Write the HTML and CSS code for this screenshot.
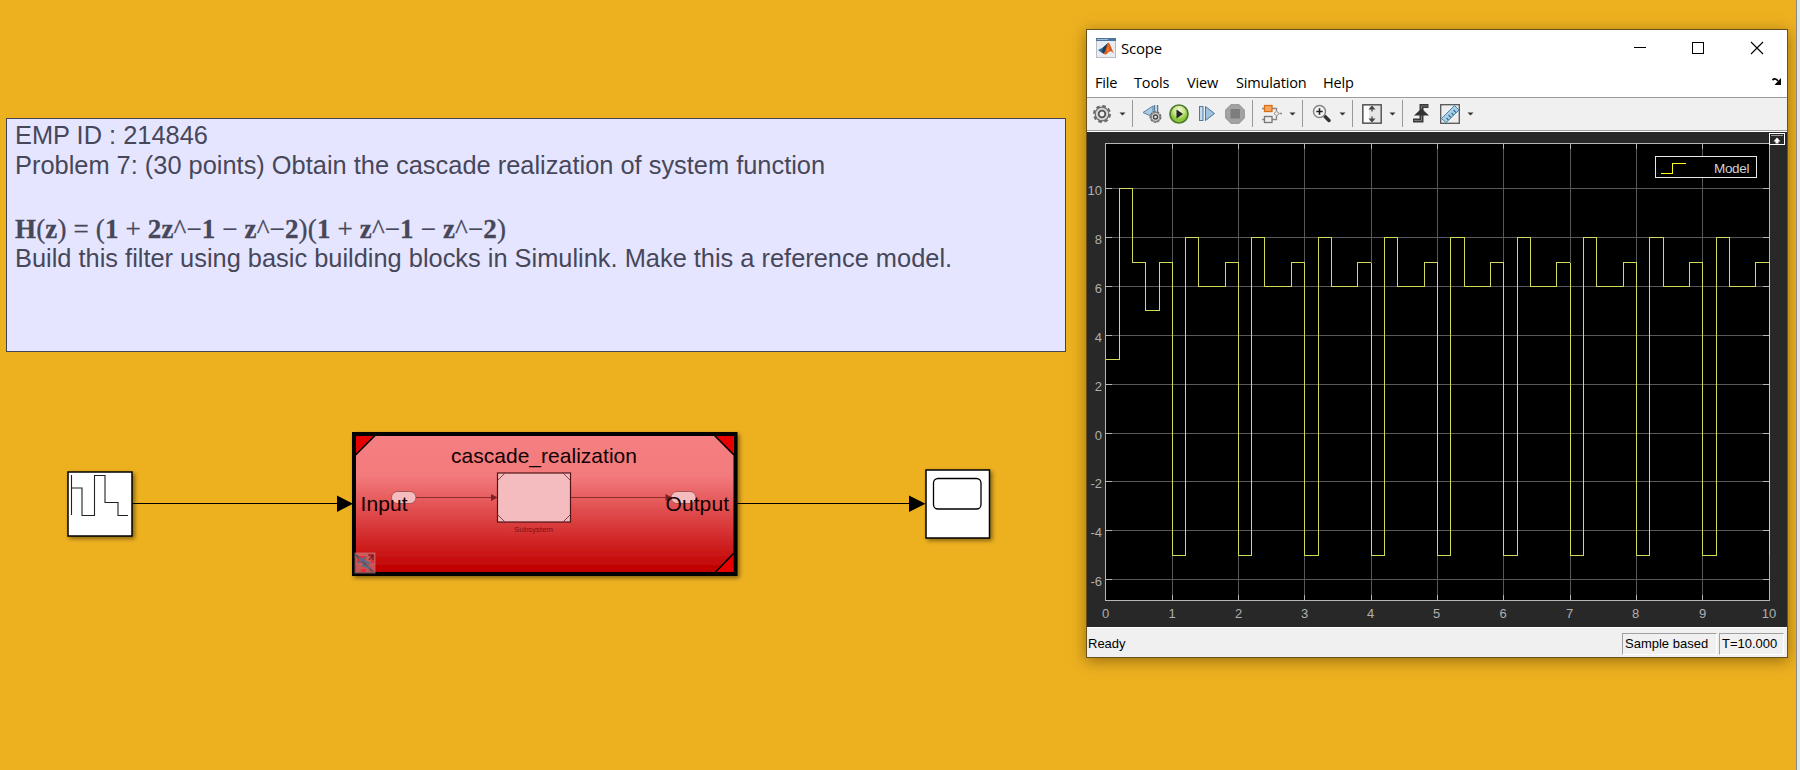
FILE: index.html
```html
<!DOCTYPE html>
<html lang="en">
<head>
<meta charset="utf-8">
<title>Cascade realization</title>
<link rel="stylesheet" href="styles.css">
</head>
<body>
<main class="desktop">
  <section class="model">
    <div class="note">
      <p class="line">EMP ID : 214846</p>
      <p class="line">Problem 7: (30 points) Obtain the cascade realization of system function</p>
      <p class="formula"><span class="n">H</span>(<span class="n">z</span>) = (<span class="n">1</span> + <span class="n">2z</span><i>^−</i><span class="n">1</span> − <span class="n">z</span><i>^−</i><span class="n">2</span>)(<span class="n">1</span> + <span class="n">z</span><i>^−</i><span class="n">1</span> − <span class="n">z</span><i>^−</i><span class="n">2</span>)</p>
      <p class="line">Build this filter using basic building blocks in Simulink. Make this a reference model.</p>
    </div>
    <svg class="diagram" width="1080" height="180" viewBox="0 420 1080 180">
      <defs>
        <linearGradient id="red" x1="0" y1="0" x2="0" y2="1">
          <stop offset="0" stop-color="#f57f81"/><stop offset=".3" stop-color="#f37a7c"/><stop offset=".96" stop-color="#c20202"/><stop offset="1" stop-color="#bd0000"/>
        </linearGradient>
        <filter id="sh" x="-20%" y="-20%" width="150%" height="150%"><feDropShadow dx="2" dy="2" stdDeviation="2" flood-color="#000" flood-opacity=".45"/></filter>
      </defs>
      <path d="M132 503.5H340M737 503.5H912" stroke="#000" stroke-width="1.2"/>
      <path d="M337 495.5L353 503.7L337 512zM909 495.5L925.500 503.700L909 512z"/>
      <g fill="#fff" stroke="#000" stroke-width="1.5">
        <rect x="68" y="472" width="64" height="64" filter="url(#sh)"/>
        <path d="M71.500 475V515M71.500 488H82V515.500H94.500V475.500H105V502.500H118V515.500H128" fill="none" stroke="#222" stroke-width="1.1"/>
        <rect x="926" y="470" width="63.500" height="68" filter="url(#sh)"/>
        <rect x="933.500" y="478.500" width="47.500" height="30.500" rx="4.500" stroke-width="1.3"/>
      </g>
      <rect x="354" y="434" width="381.500" height="140" fill="url(#red)" stroke="#000" stroke-width="4" filter="url(#sh)"/>
      <path d="M356 436h18l-18 18zM733.500 436h-18l18 18zM733.500 572v-18l-18 18z" fill="#e60000"/>
      <path d="M375 435.500L355.500 455M714.500 435.500L734 455M734 553L715 572.500" stroke="#000" stroke-width="1.7"/>
      <g fill="#f4bcbe" stroke="#6a2023" stroke-width="1">
        <rect x="391.500" y="491.500" width="24.500" height="12" rx="6" stroke="#a55"/>
        <rect x="671" y="491.500" width="25" height="12" rx="6" stroke="#a55"/>
        <path d="M416 497.500H494M571 497.500H668" fill="none" stroke="#8b2b2e"/>
        <path d="M491 494l6.500 3.500l-6.500 3.500zM665.500 494l6.500 3.500l-6.500 3.500z" fill="#7a2226" stroke="none"/>
        <rect x="497.500" y="473" width="73" height="49" stroke="#501518" stroke-width="1.2"/>
        <path d="M505 473L497.500 480.500M563 473L570.500 480.500M505 522L497.500 514.500M563 522L570.500 514.500" stroke="#7a3236" stroke-width=".9"/>
      </g>
      <text x="514" y="531.800" font-size="8" textLength="39" fill="#7d1216">Subsystem</text>
      <g font-size="21" fill="#100">
        <text x="451" y="462.700" textLength="186">cascade_realization</text>
        <text x="360.500" y="510.500" textLength="47">Input</text>
        <text x="665.500" y="510.500" textLength="63.500">Output</text>
      </g>
      <g>
        <rect x="354.500" y="552.500" width="21" height="21" fill="#c98d8d" fill-opacity=".6"/>
        <path d="M357 556h9v4h-4v3h-5zM361 569h5v3h-5zM369 554h5v9h-3v-6h-2z" fill="#ee2a35"/>
        <path d="M356 555L373 572" stroke="#5b5158" stroke-width="2"/>
        <path d="M358 563l8-6M359 558l11 6M362 565l8 3" stroke="#5c6a86" stroke-width="2"/>
        <path d="M368 555h5v5M369 560l4-5" fill="none" stroke="#6a1b20" stroke-width="1.2"/>
      </g>
    </svg>
  </section>

  <section class="scope">
    <header class="titlebar">
      <svg class="logo" width="20" height="20" viewBox="0 0 20 20">
        <rect x=".5" y=".5" width="19" height="19" fill="#e9edf2" stroke="#b9bec4"/><path d="M0 0h20v3H0z" fill="#4c739b"/><path d="M1 1.500h11" stroke="#9dbad6"/>
        <path d="M2 12l5-2.500L12 5L8 14l-2 1z" fill="#2f6d9a"/><path d="M7 9.500L12 5l-2 8-2.500 3-1.500-2z" fill="#193c56"/><path d="M7.500 16C10 14 10.500 5 12.500 4.500C14.500 6 15.500 11 18 15.500C16 14 15 13 13.500 13.500C12 14.500 10.500 17 9 16.500z" fill="#dc5a1c"/><path d="M12.500 4.500c-.5 3 0 6-2 9l2-1z" fill="#f7a745"/>
      </svg>
      <h1 class="caption">Scope</h1>
      <svg class="controls" width="130" height="14" viewBox="0 0 130 14" fill="none" stroke="#000" shape-rendering="crispEdges">
        <path d="M0 6.500h12"/><rect x="58.500" y="1.500" width="11" height="11"/><path d="M117 1l12 12M129 1l-12 12" shape-rendering="auto" stroke-width="1.1"/>
      </svg>
    </header>
    <nav class="menubar">
      <span class="m1">File</span><span class="m2">Tools</span><span class="m3">View</span><span class="m4">Simulation</span><span class="m5">Help</span>
      <svg class="dock" width="10" height="8" viewBox="0 0 10 8"><path d="M.5 2C2.500 0 4.500 1 6 3" fill="none" stroke="#000" stroke-width="1.800"/><path d="M9 0v7H2.500z"/></svg>
    </nav>
    <div class="toolbar">
      <svg class="icon first" viewBox="0 0 20 20"><circle cx="10" cy="10" r="8" fill="none" stroke="#6b6b6b" stroke-width="2" stroke-dasharray="3.700 2.583"/><circle cx="10" cy="10" r="6.800" fill="#d6d6d6" stroke="#6b6b6b" stroke-width="1.200"/><circle cx="10" cy="10" r="3.300" fill="#eee" stroke="#555" stroke-width="1.800"/></svg>
      <svg class="drop" viewBox="0 0 7 4"><path d="M.5.5h6L3.500 3.500z"/></svg>
      <i class="sep"></i>
      <svg class="icon" viewBox="0 0 20 20"><path d="M1 8.500L11 2v11z" fill="#a9cce6" stroke="#5a7f9f"/><path d="M12.500 1v7M15.500 1v7" stroke="#54799b" stroke-width="1.500"/><circle cx="13.500" cy="13" r="5.200" fill="#c9c9c9" stroke="#707070" stroke-width="1.500" stroke-dasharray="2.600 1"/><circle cx="13.500" cy="13" r="4.300" fill="#ddd" stroke="#777"/><circle cx="13.500" cy="13" r="2" fill="#eee" stroke="#444" stroke-width="1.500"/></svg>
      <svg class="icon tight" viewBox="0 0 20 20"><defs><radialGradient id="gr" cy=".3"><stop offset="0" stop-color="#f2fbdc"/><stop offset=".6" stop-color="#c6e58a"/><stop offset="1" stop-color="#8cc63f"/></radialGradient></defs><circle cx="10" cy="10" r="9" fill="url(#gr)" stroke="#4c7a2a" stroke-width="1.700"/><path d="M7.500 5.500L14 10l-6.500 4.500z" fill="#222"/></svg>
      <svg class="icon" viewBox="0 0 20 20"><rect x="1.500" y="2.500" width="3.500" height="14" fill="#c3dbef" stroke="#54799b"/><path d="M7.500 2.500L16.500 9.500L7.500 16.500z" fill="#9cc4e2" stroke="#4a7196"/></svg>
      <svg class="icon tight" viewBox="0 0 20 20"><path d="M6 0h8l6 6v8l-6 6H6l-6-6V6z" fill="#9d9d9d"/><circle cx="10" cy="10" r="9" fill="#a3a3a3"/><rect x="5.500" y="5" width="9.500" height="9.500" fill="#7d7d7d"/></svg>
      <i class="sep after"></i>
      <svg class="icon" viewBox="0 0 20 20"><path d="M0 4.500h3M10 4.500h4.500V7M14.500 12v3.500H10M0 15.500h3M18 9.500h2" fill="none" stroke="#888" stroke-width="1.300"/><rect x="2.500" y="1.500" width="7.500" height="6" fill="#f9a65a" stroke="#d5711b" stroke-width="1.300"/><rect x="2.500" y="12.500" width="7.500" height="6" fill="#eee" stroke="#777" stroke-width="1.300"/><path d="M12 9.500l2.500-2.300L17.500 9.500l-3 2.300z" fill="#eee" stroke="#888"/></svg>
      <svg class="drop" viewBox="0 0 7 4"><path d="M.5.5h6L3.500 3.500z"/></svg>
      <i class="sep"></i>
      <svg class="icon" viewBox="0 0 20 20"><path d="M13 12.500l4 4" stroke="#333" stroke-width="3.500" stroke-linecap="round"/><circle cx="7.500" cy="7.500" r="6" fill="#f2f5f7" stroke="#858585" stroke-width="1.500"/><path d="M4.300 7.500h6.400M7.500 4.300v6.400" stroke="#222" stroke-width="1.600"/></svg>
      <svg class="drop" viewBox="0 0 7 4"><path d="M.5.5h6L3.500 3.500z"/></svg>
      <i class="sep"></i>
      <svg class="icon" viewBox="0 0 20 20"><rect x=".8" y=".8" width="18.400" height="18.400" fill="#e6e6e6" stroke="#4d4d4d" stroke-width="1.400"/><path d="M2 2h5v16H2z" fill="#fff"/><path d="M10 1.500L13.500 5.500H6.500zM10 18.500L13.500 14.500H6.500z" fill="#444"/><path d="M10 5v2.500M10 15v-2.500" stroke="#555" stroke-width="1.500"/></svg>
      <svg class="drop" viewBox="0 0 7 4"><path d="M.5.5h6L3.500 3.500z"/></svg>
      <i class="sep"></i>
      <svg class="icon" viewBox="0 0 20 20"><path d="M16.500 2H9.500V16.500H1" fill="none" stroke="#3a3a3a" stroke-width="4"/><path d="M15.500 2H9.500V16.500H2" fill="none" stroke="#777" stroke-width="1"/><path d="M9.500 4.500L17 11.500H2z" fill="#333"/></svg>
      <svg class="icon tight ruler" viewBox="0 0 20 20"><rect x=".7" y=".7" width="18.600" height="18.600" fill="#eee" stroke="#555" stroke-width="1.300"/><path d="M1.500 14.500L14.500 1.500L19 6L6 18.700z" fill="#a7d0e6" stroke="#4c86a8"/><path d="M8.500 16l-2-2M11 13.500l-2.500-2.500M13.500 11l-2-2M16 8.500l-2.500-2.500" stroke="#3b6f91" stroke-width="1.200"/></svg>
      <svg class="drop" viewBox="0 0 7 4"><path d="M.5.5h6L3.500 3.500z"/></svg>
    </div>
    <svg class="plot" width="700" height="495" viewBox="1087 132 700 495">
      <defs>
        <path id="cycle" d="M1172.100 262.500V555.500H1185.300V237.500H1198.600V286.500H1225.100V262.500H1238.500"/>
      </defs>
      <rect x="1105" y="143" width="664" height="457" fill="#000"/>
      <g shape-rendering="crispEdges" fill="none">
        <path stroke="#585858" d="M1172.500 144V600M1238.500 144V600M1304.500 144V600M1371.500 144V600M1437.500 144V600M1503.500 144V600M1570.500 144V600M1636.500 144V600M1702.500 144V600M1106 188.500H1769M1106 237.500H1769M1106 286.500H1769M1106 335.500H1769M1106 384.500H1769M1106 433.500H1769M1106 481.500H1769M1106 530.500H1769M1106 579.500H1769"/>
        <path stroke="#b5b5b5" d="M1105.500 143.500H1769.500V600.500H1105.500zM1172.500 143v6m0 446v6M1238.500 143v6m0 446v6M1304.500 143v6m0 446v6M1371.500 143v6m0 446v6M1437.500 143v6m0 446v6M1503.500 143v6m0 446v6M1570.500 143v6m0 446v6M1636.500 143v6m0 446v6M1702.500 143v6m0 446v6M1105 188.500h7m651 0h7M1105 237.500h7m651 0h7M1105 286.500h7m651 0h7M1105 335.500h7m651 0h7M1105 384.500h7m651 0h7M1105 433.500h7m651 0h7M1105 481.500h7m651 0h7M1105 530.500h7m651 0h7M1105 579.500h7m651 0h7"/>
        <g stroke="#d3d958">
          <path d="M1105.500 359.500H1119.500V188.500H1132.500V262.500H1145.500V310.500H1159.500V262.500H1172.500"/>
          <use href="#cycle"/><use href="#cycle" x="66.300"/><use href="#cycle" x="132.700"/><use href="#cycle" x="199.100"/><use href="#cycle" x="265.400"/><use href="#cycle" x="331.800"/><use href="#cycle" x="398.200"/><use href="#cycle" x="464.500"/><use href="#cycle" x="530.800"/>
          <path d="M1769.500 262V555"/>
        </g>
        <rect x="1655.500" y="156.500" width="101" height="21" fill="#000" stroke="#e6e6e6"/>
        <path d="M1661 173.500H1672.500V163.500H1686" stroke="#ffff11"/>
        <path d="M1769.500 133.500h15v11h-15z" fill="#282828" stroke="#fff"/>
        <path d="M1771 135.500h12" stroke="#999"/>
      </g>
      <path d="M1773.500 141.500L1777 137.500L1780.500 141.500H1778.500V143.500H1775.500V141.500z" fill="#fff"/>
      <text x="1714" y="173.300" font-size="13.500" textLength="35.500" fill="#d2d2d2">Model</text>
      <g class="ticks" text-anchor="end">
        <text x="1102" y="195">10</text><text x="1102" y="244">8</text><text x="1102" y="293">6</text><text x="1102" y="341.500">4</text><text x="1102" y="390.500">2</text><text x="1102" y="439.500">0</text><text x="1102" y="488">-2</text><text x="1102" y="537">-4</text><text x="1102" y="586">-6</text>
      </g>
      <g class="ticks" text-anchor="middle">
        <text x="1105.500" y="618">0</text><text x="1172" y="618">1</text><text x="1238.500" y="618">2</text><text x="1304.500" y="618">3</text><text x="1370.500" y="618">4</text><text x="1436.500" y="618">5</text><text x="1503" y="618">6</text><text x="1569.500" y="618">7</text><text x="1635.500" y="618">8</text><text x="1702.500" y="618">9</text><text x="1769" y="618">10</text>
      </g>
    </svg>
    <footer class="status">
      <span class="ready">Ready</span><span class="cell mode">Sample based</span><span class="cell time">T=10.000</span>
    </footer>
  </section>
  <div class="edge"></div>
</main>
</body>
</html>
```
FILE: styles.css
```css
* { box-sizing: border-box; }
body { margin: 0; }
.desktop {
  display: flex;
  width: 1800px;
  height: 770px;
  overflow: hidden;
  background: #edb120;
  font-family: "Liberation Sans", Arial, sans-serif;
}
.model { width: 1086px; padding-top: 118px; flex: none; }
.note {
  width: 1060px;
  height: 234px;
  margin-left: 6px;
  padding: 2px 0 0 8px;
  background: #e5e5ff;
  border: 1px solid #45454f;
  color: #47475a;
}
.line, .formula { margin: 0; white-space: nowrap; }
.line { height: 29.500px; line-height: 29.500px; font-size: 25.400px; }
.formula {
  height: 64px;
  padding-top: 32px;
  line-height: 34px;
  font-family: "Liberation Serif", "Times New Roman", serif;
  font-size: 27px;
  letter-spacing: .15px;
  -webkit-text-stroke: .3px #47475a;
}
.formula .n { font-weight: bold; }
.formula i { font-style: normal; }
.diagram { display: block; margin-top: 68px; }
.diagram text, .plot text { font-family: "Liberation Sans", Arial, sans-serif; }

.scope {
  display: flex;
  flex-direction: column;
  flex: none;
  width: 702px;
  height: 629px;
  margin-top: 29px;
  border: 1px solid #66521a;
  background: #fff;
  box-shadow: 0 3px 14px rgba(70, 45, 0, .5);
}
.titlebar { display: flex; height: 37px; align-items: flex-start; }
.logo { margin: 8px 0 0 9px; }
.caption {
  margin: 7px 0 0 5px;
  width: 500px;
  font: 15px/22px "Open Sans", "Noto Sans", sans-serif;
  letter-spacing: -.2px;
}
.controls { margin: 11px 0 0 13px; }
.menubar {
  display: flex;
  height: 30px;
  font: 14.500px/32px "Open Sans", "Noto Sans", sans-serif;
  white-space: nowrap;
  letter-spacing: -.15px;
}
.m1 { width: 39px; margin-left: 8px; }
.m2 { width: 53px; }
.m3 { width: 49px; }
.m4 { width: 87px; }
.m5 { width: 40px; }
.dock { margin: 11px 0 0 409px; }
.toolbar {
  display: flex;
  align-items: center;
  height: 34px;
  padding-bottom: 1px;
  background: #f0f0f0;
  border-top: 1px solid #9c9c9c;
  border-bottom: 1px solid #a0a0a0;
}
.icon { flex: none; width: 20px; height: 20px; margin-left: 9px; }
.icon.first { margin-left: 5px; }
.icon.tight { margin-left: 7px; }
.icon.ruler { margin-left: 8px; }
.drop { flex: none; width: 7px; height: 4px; margin-left: 7px; fill: #333; }
.sep { width: 1px; height: 27px; margin-left: 6px; background: #999; }
.sep.after { margin-left: 7px; }
.plot { display: block; flex: none; background: #282828; margin-top: 1px; }
.ticks { font-size: 13px; fill: #afafaf; }
.status {
  display: flex;
  flex: 1;
  background: #f0f0f0;
  border-top: 1px solid #fff;
  font-size: 13px;
  line-height: 20px;
  white-space: nowrap;
}
.ready { width: 535px; padding: 6px 0 0 1px; }
.cell { height: 22px; margin-top: 5px; padding-left: 2px; border: 1px solid; border-color: #a0a0a0 #fff #fff #a0a0a0; }
.mode { width: 95px; }
.time { width: 65px; margin-left: 2px; padding-left: 2px; }
.edge { width: 4px; margin-left: auto; background: #e3e5e6; border-left: 1px solid #888; }
```
